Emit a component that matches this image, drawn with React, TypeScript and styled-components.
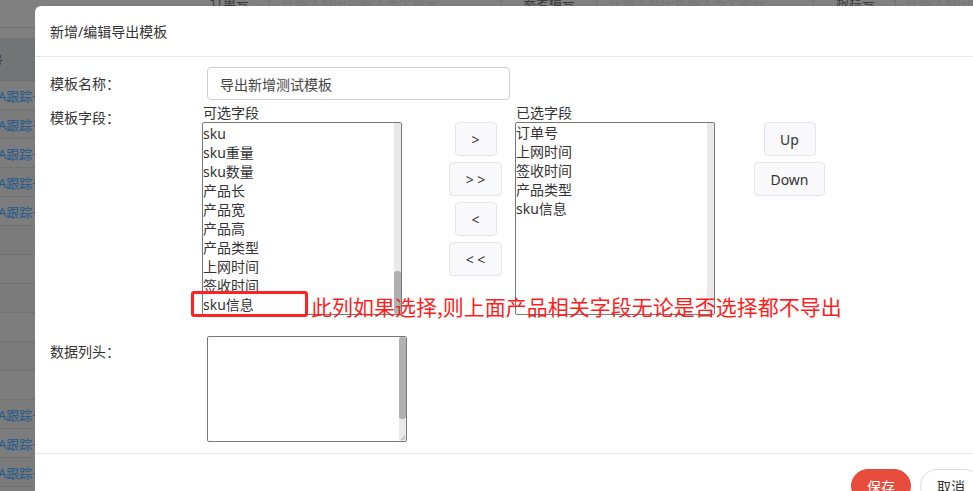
import React, { useEffect, useRef } from "react";
import styled, { createGlobalStyle } from "styled-components";

const Global = createGlobalStyle`
  html, body { margin: 0; padding: 0; width: 100%; height: 100%; overflow: hidden; background: #7e7e7e; }
  body { font-family: "Noto Sans", "Noto Sans CJK SC", sans-serif; }
  * { box-sizing: border-box; }
`;

/* ---------- dimmed page behind the dialog ---------- */
const Page = styled.div`
  position: relative;
  width: 973px;
  height: 491px;
  overflow: hidden;
  background: #7e7e7e;
`;

const BgTable = styled.div`
  display: flex;
  flex-direction: column;
  width: 973px;
`;

const BgHeadRow = styled.div`
  display: flex;
  height: 28px;
  border-bottom: 1px solid #717171;
  background: #808080;
`;

const BgHeadCell = styled.div<{ $w?: number; $pad: number; $faint?: boolean }>`
  ${(p) => (p.$w ? `width: ${p.$w}px; flex: none;` : "flex: 1;")}
  border-right: 1px solid #727272;
  padding-left: ${(p) => p.$pad}px;
  font-size: 13px;
  line-height: 4px;
  white-space: nowrap;
  overflow: hidden;
  color: ${(p) => (p.$faint ? "#767676" : "#3a3a3a")};
`;

const BgThinRow = styled.div`
  height: 11px;
  border-bottom: 1px solid #727272;
  background: #7f7f7f;
`;

const BgSubHead = styled.div`
  height: 42px;
  border-bottom: 1px solid #6e7070;
  background: #727576;
  display: flex;
  align-items: center;
  font-size: 13px;
  color: #2e3030;
  white-space: nowrap;
  overflow: hidden;
`;

const BgRow = styled.div<{ $alt?: boolean }>`
  height: 29px;
  border-bottom: 1px solid #717171;
  background: ${(p) => (p.$alt ? "#7b7b7b" : "#7d7d7d")};
  display: flex;
  align-items: center;
  font-size: 13px;
  white-space: nowrap;
  overflow: hidden;
  color: #1d5a8e;
`;

const Shifted = styled.span<{ $x: number }>`
  margin-left: ${(p) => p.$x}px;
`;

/* ---------- dialog ---------- */
const Modal = styled.div`
  position: absolute;
  left: 35px;
  top: 6px;
  width: 962px;
  height: 540px;
  background: #fff;
  border-radius: 6px;
  display: flex;
  flex-direction: column;
  color: #333;
`;

const Header = styled.div`
  height: 51px;
  flex: none;
  display: flex;
  align-items: center;
  padding: 0 15px;
  border-bottom: 1px solid #e6e6ea;
  font-size: 14px;
  color: #333;
`;

const Body = styled.div`
  flex: none;
  display: flex;
  flex-direction: column;
  padding: 10px 15px 11px;
`;

const FormRow = styled.div<{ $top?: number; $center?: boolean }>`
  display: flex;
  align-items: ${(p) => (p.$center ? "center" : "flex-start")};
  margin-top: ${(p) => p.$top ?? 0}px;
`;

const Label = styled.div<{ $padTop?: number }>`
  width: 152px;
  flex: none;
  font-size: 14px;
  line-height: 19px;
  color: #333;
  padding-top: ${(p) => p.$padTop ?? 0}px;
`;

const TextInput = styled.input`
  margin-left: 5px;
  width: 303px;
  height: 33px;
  border: 1px solid #cfcfd4;
  border-radius: 4px;
  padding: 0 12px;
  font-family: "Noto Sans", "Noto Sans CJK SC", sans-serif;
  font-size: 14px;
  color: #444;
  outline: none;
  background: #fff;
`;

const FieldGroup = styled.div`
  display: flex;
  align-items: flex-start;
`;

const ListCol = styled.div<{ $left?: number }>`
  display: flex;
  flex-direction: column;
  margin-left: ${(p) => p.$left ?? 0}px;
`;

const Caption = styled.div`
  font-size: 14px;
  line-height: 19px;
  padding-left: 1px;
  color: #333;
`;

/* box with a drawn scroll bar at its right */
const Frame = styled.div<{ $h: number; $ml?: number }>`
  width: 200px;
  height: ${(p) => p.$h}px;
  margin-left: ${(p) => p.$ml ?? 0}px;
  border: 1px solid #777;
  border-radius: 2px;
  display: flex;
  background: #fff;
  overflow: hidden;
`;

const ListContent = styled.div`
  flex: 1;
  overflow: hidden;
  font-size: 14px;
  line-height: 19px;
  color: #333;
`;

const ScrollTrack = styled.div`
  width: 7px;
  flex: none;
  background: #e9e9e9;
  display: flex;
  flex-direction: column;
`;

const ScrollThumb = styled.div<{ $h: number }>`
  height: ${(p) => p.$h}px;
  flex: none;
  background: #b0b0b0;
  border-radius: 3px;
`;

const TrackGap = styled.div`
  flex: 1;
`;

const Grip = styled.svg`
  display: block;
  flex: none;
`;

const Option = styled.div`
  white-space: nowrap;
  height: 19px;
`;

const ButtonCol = styled.div<{ $left: number; $w: number }>`
  display: flex;
  flex-direction: column;
  align-items: center;
  gap: 6px;
  padding-top: 19px;
  margin-left: ${(p) => p.$left}px;
  width: ${(p) => p.$w}px;
`;

const MoveButton = styled.button<{ $w: number }>`
  width: ${(p) => p.$w}px;
  height: 34px;
  padding: 0;
  border: 1px solid #e4e4ec;
  border-radius: 4px;
  background: #f9f9fb;
  color: #333;
  font-family: "Noto Sans", "Noto Sans CJK SC", sans-serif;
  font-size: 14px;
  white-space: pre;
`;

const TextArea = styled.textarea`
  flex: 1;
  min-width: 0;
  border: none;
  padding: 2px;
  font-family: "Noto Sans", "Noto Sans CJK SC", sans-serif;
  font-size: 14px;
  line-height: 19px;
  resize: none;
  outline: none;
  overflow: hidden;
  background: transparent;
`;

const Footer = styled.div`
  flex: none;
  display: flex;
  justify-content: flex-end;
  gap: 9px;
  border-top: 1px solid #e6e6ea;
  padding: 15px 15px;
`;

const PillButton = styled.button<{ $primary?: boolean; $w: number }>`
  width: ${(p) => p.$w}px;
  height: 34px;
  border-radius: 17px;
  border: 1px solid ${(p) => (p.$primary ? "#e74c3c" : "#dcdce6")};
  background: ${(p) => (p.$primary ? "#e74c3c" : "#fff")};
  color: ${(p) => (p.$primary ? "#fff" : "#333")};
  font-family: "Noto Sans", "Noto Sans CJK SC", sans-serif;
  font-size: 14px;
  padding: 0;
`;

/* ---------- annotation drawn over the dialog ---------- */
const MarkBox = styled.div`
  position: absolute;
  left: 156px;
  top: 285px;
  width: 117px;
  height: 26px;
  border: 3px solid #f22;
  border-radius: 3px;
  z-index: 2;
`;

const MarkText = styled.div`
  position: absolute;
  left: 276px;
  top: 287px;
  font-family: "Noto Sans CJK SC", sans-serif;
  font-size: 21px;
  line-height: 26px;
  color: #ff1e1e;
  white-space: nowrap;
  z-index: 2;
`;

const hiddenFields = [
  "订单号", "参考编号", "跟踪号", "转单号", "渠道", "目的国家", "收件人", "收件人电话",
  "收件人邮编", "收件人城市", "收件人省份", "收件人地址1", "收件人地址2", "公司名称",
  "重量", "计费重量", "件数", "长", "宽", "高", "申报价值", "币种", "运费", "附加费",
  "总费用", "创建时间", "入库时间", "出库时间", "状态", "备注", "发件人", "发件人电话",
  "中文品名", "英文品名",
];

const visibleFields = [
  "sku", "sku重量", "sku数量", "产品长", "产品宽", "产品高", "产品类型", "上网时间", "签收时间", "sku信息",
];

const selectedFields = ["订单号", "上网时间", "签收时间", "产品类型", "sku信息"];

const headCols = [
  { w: 270, pad: 210, text: "订单号" },
  { w: 232, pad: 12, text: "在输入框中可输入多个单号", faint: true },
  { w: 95, pad: 21, text: "参考编号" },
  { w: 217, pad: 12, text: "在输入框中可输入多个单号", faint: true },
  { w: 82, pad: 22, text: "跟踪号" },
  { pad: 10, text: "在输入框中可", faint: true },
];

const rowHasText = (i: number) => i < 5 || (i >= 11 && i < 14);

export default function App() {
  const listRef = useRef<HTMLDivElement>(null);
  useEffect(() => {
    if (listRef.current) listRef.current.scrollTop = listRef.current.scrollHeight;
  }, []);

  return (
    <>
      <Global />
      <Page>
        <BgTable>
          <BgHeadRow>
            {headCols.map((c, i) => (
              <BgHeadCell key={i} $w={c.w} $pad={c.pad} $faint={c.faint}>
                {c.text}
              </BgHeadCell>
            ))}
          </BgHeadRow>
          <BgThinRow />
          <BgSubHead>
            <Shifted $x={-36}>跟踪号</Shifted>
          </BgSubHead>
          {Array.from({ length: 15 }).map((_, i) => (
            <BgRow key={i} $alt={i % 2 === 1}>
              {rowHasText(i) && <Shifted $x={-2}>A跟踪号</Shifted>}
            </BgRow>
          ))}
        </BgTable>

        <Modal>
          <Header>新增/编辑导出模板</Header>
          <Body>
            <FormRow $center>
              <Label>模板名称：</Label>
              <TextInput defaultValue="导出新增测试模板" />
            </FormRow>

            <FormRow $top={3}>
              <Label $padTop={5}>模板字段：</Label>
              <FieldGroup>
                <ListCol>
                  <Caption>可选字段</Caption>
                  <Frame $h={193}>
                    <ListContent ref={listRef}>
                      {[...hiddenFields, ...visibleFields].map((f, i) => (
                        <Option key={i}>{f}</Option>
                      ))}
                    </ListContent>
                    <ScrollTrack>
                      <TrackGap />
                      <ScrollThumb $h={43} />
                    </ScrollTrack>
                  </Frame>
                </ListCol>
                <ButtonCol $left={47} $w={53}>
                  <MoveButton $w={42}>&gt;</MoveButton>
                  <MoveButton $w={53}>{"> >"}</MoveButton>
                  <MoveButton $w={42}>&lt;</MoveButton>
                  <MoveButton $w={53}>{"< <"}</MoveButton>
                </ButtonCol>
                <ListCol $left={13}>
                  <Caption>已选字段</Caption>
                  <Frame $h={193}>
                    <ListContent>
                      {selectedFields.map((f, i) => (
                        <Option key={i}>{f}</Option>
                      ))}
                    </ListContent>
                    <ScrollTrack />
                  </Frame>
                </ListCol>
                <ButtonCol $left={39} $w={71}>
                  <MoveButton $w={52}>Up</MoveButton>
                  <MoveButton $w={71}>Down</MoveButton>
                </ButtonCol>
              </FieldGroup>
            </FormRow>

            <FormRow $top={21}>
              <Label $padTop={6}>数据列头：</Label>
              <Frame $h={106} $ml={5}>
                <TextArea defaultValue={"\n\n\n\n\n\n"} />
                <ScrollTrack>
                  <ScrollThumb $h={82} />
                  <TrackGap />
                  <Grip width="7" height="7" viewBox="0 0 7 7">
                    <path d="M6 2 L2 6 M6 4.5 L4.5 6" stroke="#8a8a8a" strokeWidth="0.8" />
                  </Grip>
                </ScrollTrack>
              </Frame>
            </FormRow>
          </Body>
          <Footer>
            <PillButton $primary $w={60}>保存</PillButton>
            <PillButton $w={62}>取消</PillButton>
          </Footer>

          <MarkBox />
          <MarkText>此列如果选择,则上面产品相关字段无论是否选择都不导出</MarkText>
        </Modal>
      </Page>
    </>
  );
}
